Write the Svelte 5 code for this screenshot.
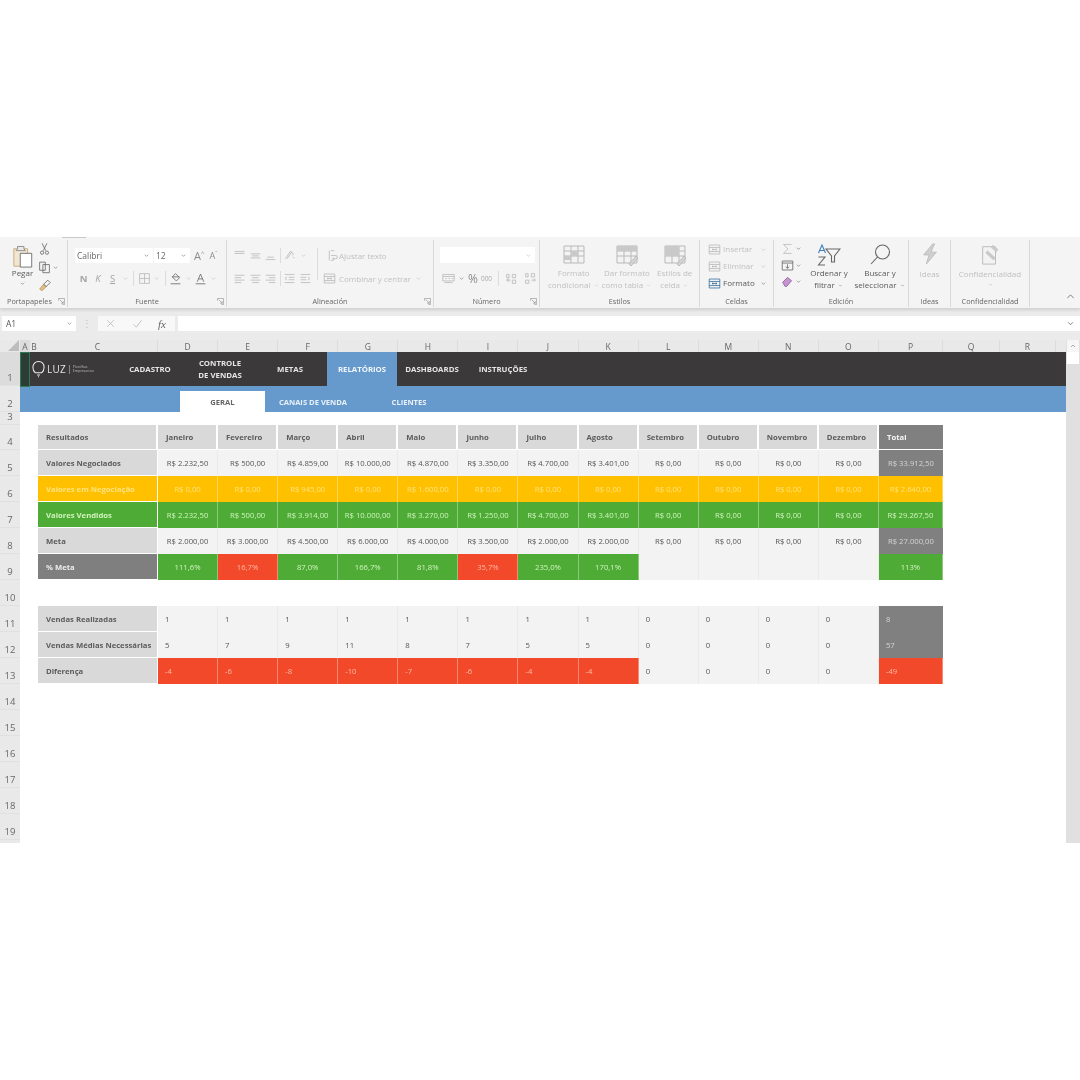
<script>
  const P = {
    chev: 'M5 6.5l3 3 3-3',
    up: 'M4 10l4-4 4 4',
    atop: 'M2 3h12M2 5.5h12',
    amid: 'M2 6h12M4 8.5h8M2 11h12',
    abot: 'M4 10h8M2 13h12',
    left: 'M2 4h12M2 7h8M2 10h12M2 13h8',
    center: 'M2 4h12M4 7h8M2 10h12M4 13h8',
    right: 'M2 4h12M6 7h8M2 10h12M6 13h8',
    indl: 'M2 3h12M7 6.5h7M7 9.5h7M2 13h12M5 6L2.5 8 5 10',
    indr: 'M2 3h12M2 6.5h7M2 9.5h7M2 13h12M11 6l2.5 2L11 10',
    orient: 'M3 12L9 3M5 12L11 3M9 3l4 3-2 2M12 10l2 1',
    wrap: 'M6 2h4M6 8h6a2 2 0 010 4H9M6 14h3M4 2v12M10 10.5l-2 1.5 2 1.5',
    merge: 'M1.5 2.5h13v11h-13zM1.5 5.5h13M1.5 10.5h13M5 8h6M5 8l1.5-1.3M5 8l1.5 1.3M11 8L9.5 6.7M11 8L9.5 9.3',
    border: 'M2 2h12v12H2zM2 8h12M8 2v12',
    fill: 'M8 2l5 5-4 4-5-5zM4 6h9M2 14.5h12',
    atxt: 'M4 12L8 2.5 12 12M5.5 8.5h5M2 14.5h12',
    money: 'M1 3h14v8H1zM1 5.5h14M4 8h2M8 8h2M12 8h2M3 13h10',
    inc: 'M2 3h3v4H2zM9 3h4v4H9zM2 10h5M5 8l-3 2 3 2M9 10h4v4H9z',
    dec: 'M2 2h3v4H2zM9 2h4v4H9zM9 10h5M12 8l2 2-2 2M2 10h4v4H2z',
    sigma: 'M13 3H3l5.5 5.5L3 14h10',
    fillDown: 'M1.5 2.5h13v11h-13zM1.5 5h13M8 6.5v5M6 9.5l2 2 2-2',
    close: 'M4 4l8 8M12 4l-8 8',
    check: 'M3 9l3.5 3.5L13 4'
  };

  const cols = [
    ['A', 'ca'], ['B', 'cb'], ['C', 'cc'], ['D', 'cm'], ['E', 'cm'], ['F', 'cm'], ['G', 'cm'], ['H', 'cm'],
    ['I', 'cm'], ['J', 'cm'], ['K', 'cm'], ['L', 'cm'], ['M', 'cm'], ['N', 'cm'], ['O', 'cm'], ['P', 'cp'],
    ['Q', 'cq'], ['R', 'cr']
  ];

  const rowNums = [
    [1, 'h1'], [2, 'h2'], [3, 'h3'], [4, 'h4'], ...Array.from({ length: 15 }, (_, i) => [i + 5, 'hn'])
  ];

  const months = ['Janeiro', 'Fevereiro', 'Março', 'Abril', 'Maio', 'Junho', 'Julho', 'Agosto', 'Setembro', 'Outubro', 'Novembro', 'Dezembro'];

  const brl = (list) => list.map((v) => 'R$ ' + v);
  const zeros = ['0,00', '0,00', '0,00', '0,00'];

  const top = [
    { label: 'Valores Negociados', lc: 'lab-g', cc: 'plain', tc: 'tot-g', cells: brl(['2.232,50', '500,00', '4.859,00', '10.000,00', '4.870,00', '3.350,00', '4.700,00', '3.401,00', ...zeros]), total: 'R$ 33.912,50' },
    { label: 'Valores em Negociação', lc: 'lab-a', cc: 'amber', tc: 'amber', cells: brl(['0,00', '0,00', '945,00', '0,00', '1.600,00', '0,00', '0,00', '0,00', ...zeros]), total: 'R$ 2.640,00' },
    { label: 'Valores Vendidos', lc: 'lab-v', cc: 'green', tc: 'green', cells: brl(['2.232,50', '500,00', '3.914,00', '10.000,00', '3.270,00', '1.250,00', '4.700,00', '3.401,00', ...zeros]), total: 'R$ 29.267,50' },
    { label: 'Meta', lc: 'lab-g', cc: 'plain', tc: 'tot-g', cells: brl(['2.000,00', '3.000,00', '4.500,00', '6.000,00', '4.000,00', '3.500,00', '2.000,00', '2.000,00', ...zeros]), total: 'R$ 27.000,00' }
  ];

  const pct = [['111,6%', 'green'], ['16,7%', 'red'], ['87,0%', 'green'], ['166,7%', 'green'], ['81,8%', 'green'], ['35,7%', 'red'], ['235,0%', 'green'], ['170,1%', 'green'], ['', 'plain'], ['', 'plain'], ['', 'plain'], ['', 'plain']];

  const low = [
    { label: 'Vendas Realizadas', cells: [1, 1, 1, 1, 1, 1, 1, 1, 0, 0, 0, 0], red: 0, total: 8, tc: 'tot-g' },
    { label: 'Vendas Médias Necessárias', cells: [5, 7, 9, 11, 8, 7, 5, 5, 0, 0, 0, 0], red: 0, total: 57, tc: 'tot-g' },
    { label: 'Diferença', cells: [-4, -6, -8, -10, -7, -6, -4, -4, 0, 0, 0, 0], red: 8, total: -49, tc: 'red' }
  ];
</script>

{#snippet ic(name, cls = '')}
  <svg class="ic {cls}" viewBox="0 0 16 16" aria-hidden="true"><path d={P[name]} /></svg>
{/snippet}

{#snippet launcher()}
  <svg class="launch" viewBox="0 0 8 8" aria-hidden="true"><path d="M.5 3V.5H7.5V7.5H5M2 2l4 4M6 3.500V6H3.500" /></svg>
{/snippet}

{#snippet sheetIcon(kind)}
  <svg class="bigic" viewBox="0 0 24 22" aria-hidden="true">
    <path class="grid" d="M2 2h20v17H2zM2 7h20M2 12h20M9 2v17M16 2v17" />
    {#if kind === 'cond'}
      <path class="tint" d="M9 7h7v5H9zM2 12h7v4H2z" />
    {:else if kind === 'table'}
      <path class="tint" d="M2 2h20v5H2z" />
      <path class="brush" d="M14 20l7-8 2 2-7 8z" />
    {:else}
      <path class="tint" d="M2 2h14v10H2z" />
      <path class="brush" d="M14 20l7-8 2 2-7 8z" />
    {/if}
  </svg>
{/snippet}

<div class="page">
  <div class="window">
    <div class="ribbon">
      <span class="tabmark"></span>

      <section class="g g-clip">
        <div class="body clip">
          <div class="paste">
            <svg class="pasteic" viewBox="0 0 24 26" aria-hidden="true">
              <path class="board" d="M2 4h15v19H2z" />
              <path class="clipper" d="M6 4V1.500h7V4l1.500 2h-10z" />
              <path class="sheet" d="M9 9h12.500v15H9z" />
            </svg>
            <span class="t on">Pegar</span>
            {@render ic('chev', 'on mini')}
          </div>
          <div class="clipside">
            <svg class="sm" viewBox="0 0 16 16" aria-hidden="true"><path class="line" d="M5 1l4.500 9M11 1L6.500 10" /><circle class="line" cx="5" cy="12.500" r="2" /><circle class="line" cx="11" cy="12.500" r="2" /></svg>
            <div class="inl">
              <svg class="sm" viewBox="0 0 16 16" aria-hidden="true"><path class="line" d="M2 2h7v10H2zM6 5h8v10H6z" /></svg>
              {@render ic('chev', 'on mini')}
            </div>
            <svg class="sm" viewBox="0 0 16 16" aria-hidden="true"><path class="tan" d="M2 13l5-6 3 3-5 5z" /><path class="line" d="M7 7l5-5 3 3-5 5z" /></svg>
          </div>
        </div>
        <div class="lab lab-left">Portapapeles</div>
        {@render launcher()}
      </section>

      <section class="g g-font">
        <div class="body stack">
          <div class="row r-font1">
            <div class="combo c-font"><span>Calibri</span>{@render ic('chev', 'on mini')}</div>
            <div class="combo c-size"><span>12</span>{@render ic('chev', 'on mini')}</div>
            <span class="grow">A<sup>^</sup></span>
            <span class="shrink">A<sup>ˇ</sup></span>
          </div>
          <div class="row r-font2">
            <b class="fx">N</b><i class="fx">K</i><u class="fx">S</u>
            {@render ic('chev', 'off mini')}
            <span class="vs"></span>
            {@render ic('border', 'off')}
            {@render ic('chev', 'off mini')}
            <span class="vs"></span>
            {@render ic('fill', 'on')}
            {@render ic('chev', 'off mini')}
            {@render ic('atxt', 'on')}
            {@render ic('chev', 'off mini')}
          </div>
        </div>
        <div class="lab">Fuente</div>
        {@render launcher()}
      </section>

      <section class="g g-align">
        <div class="body stack">
          <div class="row r-al1">
            {@render ic('atop', 'off')}{@render ic('amid', 'off')}{@render ic('abot', 'off')}
            <span class="vs"></span>
            {@render ic('orient', 'off')}
            {@render ic('chev', 'off mini')}
            <span class="vs vs-wide"></span>
            {@render ic('wrap', 'off')}
            <span class="t off">Ajustar texto</span>
          </div>
          <div class="row r-al2">
            {@render ic('left', 'off')}{@render ic('center', 'off')}{@render ic('right', 'off')}
            <span class="vs"></span>
            {@render ic('indl', 'off')}{@render ic('indr', 'off')}
            <span class="vs vs-2"></span>
            {@render ic('merge', 'off')}
            <span class="t off tm">Combinar y centrar</span>
            {@render ic('chev', 'off mini')}
          </div>
        </div>
        <div class="lab">Alineación</div>
        {@render launcher()}
      </section>

      <section class="g g-num">
        <div class="body stack">
          <div class="combo c-num">{@render ic('chev', 'off mini')}</div>
          <div class="row r-num">
            {@render ic('money', 'off')}
            {@render ic('chev', 'on mini')}
            <span class="pct">%</span>
            <span class="k">000</span>
            <span class="vs"></span>
            {@render ic('inc', 'off')}
            <span class="numgap"></span>
            {@render ic('dec', 'off')}
          </div>
        </div>
        <div class="lab">Número</div>
        {@render launcher()}
      </section>

      <section class="g g-styles">
        <div class="body styles">
          <div class="big b-cond">
            {@render sheetIcon('cond')}
            <span class="t off">Formato<br />condicional {@render ic('chev', 'off tiny')}</span>
          </div>
          <div class="big b-table">
            {@render sheetIcon('table')}
            <span class="t off">Dar formato<br />como tabla {@render ic('chev', 'off tiny')}</span>
          </div>
          <div class="big b-cell">
            {@render sheetIcon('cell')}
            <span class="t off">Estilos de<br />celda {@render ic('chev', 'off tiny')}</span>
          </div>
        </div>
        <div class="lab">Estilos</div>
      </section>

      <section class="g g-cells">
        <div class="body cellsb">
          <div class="ln">{@render ic('merge', 'off')}<span class="t off ct">Insertar</span>{@render ic('chev', 'off mini')}</div>
          <div class="ln">{@render ic('merge', 'off')}<span class="t off ct">Eliminar</span>{@render ic('chev', 'off mini')}</div>
          <div class="ln">{@render ic('merge', 'blue')}<span class="t on ct">Formato</span>{@render ic('chev', 'on mini')}</div>
        </div>
        <div class="lab">Celdas</div>
      </section>

      <section class="g g-edit">
        <div class="body edit">
          <div class="editcol">
            <div class="inl">{@render ic('sigma', 'off')}{@render ic('chev', 'on mini')}</div>
            <div class="inl">{@render ic('fillDown', 'on')}{@render ic('chev', 'on mini')}</div>
            <div class="inl">
              <svg class="ic" viewBox="0 0 16 16" aria-hidden="true"><path class="eraser" d="M2 9l6-6 5 4-6 7H5z" /></svg>
              {@render ic('chev', 'on mini')}
            </div>
          </div>
          <div class="big b-sort">
            <svg class="bigic" viewBox="0 0 24 22" aria-hidden="true">
              <path class="blueline" d="M1.500 9L5 1l3.500 8M3 6.500h4" />
              <path class="dark" d="M1.500 13H8L1.500 21H8" />
              <path class="dark" d="M9 5h14l-5.500 7v6h-3v-6z" />
            </svg>
            <span class="t on">Ordenar y<br />filtrar {@render ic('chev', 'on tiny')}</span>
          </div>
          <div class="big b-search">
            <svg class="bigic" viewBox="0 0 24 22" aria-hidden="true"><circle class="dark" cx="14.500" cy="8" r="7" /><path class="dark" d="M9.500 13L3 20" /></svg>
            <span class="t on">Buscar y<br />seleccionar {@render ic('chev', 'on tiny')}</span>
          </div>
        </div>
        <div class="lab">Edición</div>
      </section>

      <section class="g g-ideas">
        <div class="body bigone">
          <svg class="bigic" viewBox="0 0 24 24" aria-hidden="true"><path class="bolt" d="M15 1L5 13h6l-3 10 11-13h-6l4-9z" /></svg>
          <span class="t off">Ideas</span>
        </div>
        <div class="lab">Ideas</div>
      </section>

      <section class="g g-conf">
        <div class="body bigone">
          <svg class="bigic" viewBox="0 0 24 24" aria-hidden="true"><path class="grid" d="M4 4h14v19H4z" /><path class="tint" d="M9 8l9 8-2 3-9-8zM15 2l6 5-2 3-6-5z" /></svg>
          <span class="t off">Confidencialidad</span>
          {@render ic('chev', 'off mini')}
        </div>
        <div class="lab">Confidencialidad</div>
      </section>

      <div class="collapse">{@render ic('up', 'on')}</div>
    </div>

    <div class="fbar">
      <div class="namebox"><span>A1</span>{@render ic('chev', 'on mini')}</div>
      <span class="dots">⋮</span>
      <div class="fbtns">
        {@render ic('close', 'off')}
        {@render ic('check', 'off')}
        <i class="fxl">fx</i>
      </div>
      <div class="finput">{@render ic('chev', 'on')}</div>
    </div>

    <div class="grid-area">
      <div class="sheet-wrap">
        <div class="colhead">
          <div class="corner"><span class="tri"></span></div>
          {#each cols as [name, cls]}
            <div class="colh {cls}">{name}</div>
          {/each}
        </div>

        <div class="sheet-main">
          <div class="rowhead">
            {#each rowNums as [n, cls]}
              <div class="rowh {cls}">{n}</div>
            {/each}
          </div>

          <div class="canvas">
            <nav class="nav">
              <div class="logo">
                <svg class="bulb" viewBox="0 0 14 18" aria-hidden="true"><path d="M3.500 13C1.800 11.800 1 10 1 7.500 1 3.500 3.500 1 7 1s6 2.500 6 6.500c0 2.500-.8 4.300-2.500 5.500zM5.500 15.500h3M6.500 17.300h1" /></svg>
                <span class="luz">LUZ</span>
                <span class="lsep"></span>
                <span class="ltiny">Planilhas<br />Empresariais</span>
              </div>
              <span class="ni">CADASTRO</span>
              <span class="ni">CONTROLE<br />DE VENDAS</span>
              <span class="ni">METAS</span>
              <span class="ni active">RELATÓRIOS</span>
              <span class="ni">DASHBOARDS</span>
              <span class="ni ni-last">INSTRUÇÕES</span>
              <span class="cellsel"></span>
            </nav>

            <div class="subnav">
              <span class="si current">GERAL</span>
              <span class="si">CANAIS DE VENDA</span>
              <span class="si">CLIENTES</span>
            </div>

            <div class="tbl tbl-top">
              <div class="c lab-g h">Resultados</div>
              {#each months as m}
                <div class="c hd h">{m}</div>
              {/each}
              <div class="c tot-g h tot-h">Total</div>

              {#each top as r}
                <div class="c {r.lc} rl">{r.label}</div>
                {#each r.cells as v}
                  <div class="c {r.cc} mid">{v}</div>
                {/each}
                <div class="c {r.tc} mid">{r.total}</div>
              {/each}

              <div class="c lab-d rl">% Meta</div>
              {#each pct as [v, k]}
                <div class="c {k} mid">{v}</div>
              {/each}
              <div class="c green mid">113%</div>
            </div>

            <div class="tbl tbl-low">
              {#each low as r}
                <div class="c lab-g rl">{r.label}</div>
                {#each r.cells as v, i}
                  <div class="c {i < r.red ? 'red' : 'plain'} lft">{v}</div>
                {/each}
                <div class="c {r.tc} lft">{r.total}</div>
              {/each}
            </div>
          </div>
        </div>
      </div>

      <div class="vscroll">
        <div class="sbtn">{@render ic('up', 'on')}</div>
        <div class="thumb"></div>
      </div>
    </div>
  </div>
</div>

<style>
  :global(body) {
    margin: 0;
    background: #fff;
  }

  .page {
    width: 1080px;
    height: 1080px;
    padding-top: 237px;
    box-sizing: border-box;
    background: #fff;
    overflow: hidden;
  }

  .window {
    width: 1080px;
    height: 606px;
    font-family: 'Open Sans', 'Liberation Sans', sans-serif;
    filter: blur(0.45px);
    display: flex;
    flex-direction: column;
    background: #eaeaea;
  }

  /* ribbon */
  .ribbon {
    position: relative;
    height: 71px;
    flex: none;
    display: flex;
    background: #f4f4f4;
    box-shadow: 0 2px 3px rgba(0, 0, 0, 0.12);
    z-index: 2;
  }

  .tabmark {
    position: absolute;
    left: 62px;
    top: 0;
    width: 24px;
    height: 1px;
    background: #c9c9c9;
  }

  .g {
    position: relative;
    height: 67px;
    flex: none;
    border-right: 1px solid #d8d8d8;
    box-sizing: border-box;
    margin-top: 3px;
  }

  .g-clip { width: 68px; }
  .g-font { width: 159px; }
  .g-align { width: 207px; }
  .g-num { width: 106px; }
  .g-styles { width: 160px; }
  .g-cells { width: 74px; }
  .g-edit { width: 135px; }
  .g-ideas { width: 42px; }
  .g-conf { width: 79px; }

  .body {
    height: 53px;
    box-sizing: border-box;
  }

  .lab {
    position: absolute;
    left: 0;
    right: 0;
    bottom: 0;
    height: 14px;
    line-height: 16px;
    text-align: center;
    font-size: 7.3px;
    color: #666;
  }

  .lab-left {
    text-align: left;
    padding-left: 7px;
  }

  .launch {
    position: absolute;
    right: 2px;
    bottom: 2px;
    width: 7px;
    height: 7px;
    fill: none;
    stroke: #9a9a9a;
    stroke-width: 0.8;
  }

  .ic {
    width: 13px;
    height: 13px;
    flex: none;
    fill: none;
    stroke: currentColor;
    stroke-width: 1;
  }

  .ic.mini {
    width: 9px;
    height: 9px;
  }

  .ic.tiny {
    width: 7px;
    height: 7px;
    vertical-align: -1px;
  }

  .ic.on { color: #666; }
  .ic.off { color: #b9b9b9; }
  .ic.blue { color: #3b6f9e; }

  .t {
    font-size: 8px;
    line-height: 12px;
    white-space: nowrap;
  }

  .t.on { color: #5a5a5a; }
  .t.off { color: #c0c0c0; }

  .row,
  .inl,
  .ln {
    display: flex;
    align-items: center;
  }

  .stack {
    display: flex;
    flex-direction: column;
  }

  .vs {
    width: 1px;
    height: 15px;
    background: #dcdcdc;
    flex: none;
  }

  /* clipboard */
  .clip {
    display: flex;
    padding: 5px 0 0 11px;
    gap: 4px;
  }

  .paste {
    width: 23px;
    display: flex;
    flex-direction: column;
    align-items: center;
  }

  .pasteic {
    width: 22px;
    height: 24px;
    flex: none;
    fill: none;
  }

  .board { fill: #f1e6d2; stroke: #c9a878; }
  .clipper { fill: #e9e9e9; stroke: #8a8a8a; }
  .sheet { fill: #fff; stroke: #6d6d6d; }

  .paste .t {
    margin-top: -2px;
  }

  .clipside {
    display: flex;
    flex-direction: column;
    gap: 4px;
    margin-top: -3px;
  }

  .sm {
    width: 13px;
    height: 14px;
    flex: none;
  }

  .line { fill: none; stroke: #666; stroke-width: 1; }
  .tan { fill: #dfbf86; stroke: #c09a5e; }

  /* font */
  .g-font .body {
    padding: 8px 0 0 7px;
  }

  .combo {
    display: flex;
    align-items: center;
    justify-content: space-between;
    height: 15px;
    background: #fff;
    box-sizing: border-box;
    padding: 0 2px;
    font-size: 8.5px;
    color: #666;
  }

  .c-font { width: 78px; }
  .c-size { width: 36px; margin-left: 1px; }

  .grow,
  .shrink {
    color: #8c8c8c;
    line-height: 15px;
  }

  .grow { font-size: 11px; margin-left: 4px; }
  .shrink { font-size: 9px; margin-left: 5px; }

  sup {
    font-size: 6px;
    line-height: 0;
  }

  .r-font2 {
    margin-top: 8px;
    height: 15px;
    padding-left: 2px;
    gap: 1.500px;
  }

  .fx {
    width: 13px;
    text-align: center;
    font-size: 9.5px;
    color: #a5a5a5;
    flex: none;
  }

  .r-font2 .vs {
    margin: 0 2px;
  }

  /* alignment */
  .g-align .body {
    padding: 8px 0 0 6px;
  }

  .r-al1,
  .r-al2 {
    height: 15px;
    gap: 2.500px;
  }

  .r-al2 {
    margin-top: 8px;
  }

  .r-al1 .t {
    margin-left: -2px;
  }

  .tm {
    margin-left: 1px;
  }

  .vs-wide {
    margin: 0 5px 0 7px;
    height: 32px;
    align-self: flex-start;
  }

  .vs-2 {
    margin: 0 4px 0 1px;
    background: transparent;
  }

  /* number */
  .g-num .body {
    padding: 7px 0 0 6px;
  }

  .c-num {
    width: 95px;
    height: 16px;
    justify-content: flex-end;
  }

  .r-num {
    margin-top: 7.500px;
    height: 15px;
    padding-left: 2px;
    gap: 2px;
  }

  .pct {
    color: #8c8c8c;
    font-size: 12px;
    line-height: 15px;
    margin-right: 1px;
  }

  .k {
    color: #aaa;
    font-size: 6.5px;
  }

  .r-num .vs {
    margin: 0 4px;
  }

  .numgap {
    width: 2px;
  }

  /* big buttons */
  .big,
  .bigone {
    display: flex;
    flex-direction: column;
    align-items: center;
    text-align: center;
  }

  .bigic {
    width: 24px;
    height: 22px;
    flex: none;
    fill: none;
    margin-bottom: 1px;
  }

  .grid { fill: #f3f3f3; stroke: #b9b9b9; }
  .tint { fill: #c9c9c9; stroke: none; }
  .brush { fill: #d5d5d5; stroke: #aaa; stroke-width: 0.7; }
  .dark { fill: none; stroke: #666; stroke-width: 1.1; }
  .blueline { fill: none; stroke: #3c80c0; stroke-width: 1.1; }
  .eraser { fill: #c594cf; stroke: #8f5aa3; }
  .bolt { fill: #cfcfcf; stroke: #bdbdbd; }

  .styles {
    display: flex;
    padding: 4px 0 0 4px;
  }

  .b-cond { width: 60px; }
  .b-table { width: 47px; }
  .b-cell { width: 49px; }

  .cellsb {
    padding: 2px 0 0 8px;
    display: flex;
    flex-direction: column;
    gap: 3px;
  }

  .ln {
    height: 14px;
    gap: 2px;
  }

  .ct {
    width: 33px;
    margin-right: 1px;
  }

  .edit {
    display: flex;
    padding: 1px 0 0 7px;
  }

  .editcol {
    display: flex;
    flex-direction: column;
    gap: 3.500px;
    width: 26px;
    padding-top: 1px;
  }

  .b-sort { width: 44px; padding-top: 3px; }
  .b-search { width: 52px; margin-left: 3px; padding-top: 3px; }

  .bigone {
    padding-top: 3px;
  }

  .bigone .bigic {
    margin-bottom: 3px;
  }

  .collapse {
    position: absolute;
    right: 3px;
    bottom: 0;
  }

  /* formula bar */
  .fbar {
    height: 32px;
    flex: none;
    box-sizing: border-box;
    padding: 8px 0 9px 2px;
    display: flex;
    align-items: stretch;
    background: #ebebeb;
  }

  .namebox {
    width: 74px;
    background: #fff;
    display: flex;
    align-items: center;
    justify-content: space-between;
    padding: 0 2px 0 4px;
    box-sizing: border-box;
    font-size: 8.5px;
    color: #555;
  }

  .dots {
    width: 22px;
    text-align: center;
    color: #bbb;
    font-size: 10px;
    line-height: 15px;
  }

  .fbtns {
    width: 77px;
    background: #f8f8f8;
    display: flex;
    align-items: center;
    box-sizing: border-box;
    padding-left: 6px;
    gap: 14px;
  }

  .fxl {
    font-family: 'Liberation Serif', serif;
    font-size: 11px;
    color: #666;
  }

  .finput {
    margin-left: 3px;
    flex: 1;
    background: #fff;
    display: flex;
    align-items: center;
    justify-content: flex-end;
    padding-right: 3px;
  }

  /* grid */
  .grid-area {
    flex: 1;
    min-height: 0;
    display: flex;
  }

  .sheet-wrap {
    width: 1066px;
    overflow: hidden;
    display: flex;
    flex-direction: column;
  }

  .colhead {
    height: 12px;
    flex: none;
    display: flex;
    background: #e9e9e9;
  }

  .corner {
    width: 20px;
    position: relative;
    flex: none;
  }

  .tri {
    position: absolute;
    right: 1px;
    bottom: 1px;
    width: 0;
    height: 0;
    border-left: 11px solid transparent;
    border-bottom: 11px solid #bdbdbd;
  }

  .colh {
    flex: none;
    font-size: 8.5px;
    line-height: 13px;
    text-align: center;
    color: #666;
    box-sizing: border-box;
    border-right: 1px solid #dcdcdc;
  }

  .ca { width: 10px; background: #dcdcdc; border: 0; }
  .cb { width: 8px; border: 0; }
  .cc { width: 120px; }
  .cm { width: 60.08px; }
  .cp { width: 64px; }
  .cq { width: 57px; }
  .cr { width: 56px; }

  .sheet-main {
    flex: 1;
    min-height: 0;
    display: flex;
  }

  .rowhead {
    width: 20px;
    flex: none;
    background: #e9e9e9;
  }

  .rowh {
    box-sizing: border-box;
    display: flex;
    align-items: flex-end;
    justify-content: center;
    font-size: 9.5px;
    line-height: 14px;
    color: #666;
    border-bottom: 1px solid #e0e0e0;
  }

  .h1 { height: 34px; background: #dcdcdc; }
  .h2 { height: 26px; }
  .h3 { height: 13px; }
  .h4 { height: 25px; }
  .hn { height: 26px; }

  .canvas {
    flex: 1;
    background: #fff;
    min-width: 0;
  }

  .nav {
    position: relative;
    height: 34px;
    display: flex;
    background: #3b393a;
  }

  .cellsel {
    position: absolute;
    left: 0;
    top: 0;
    width: 10px;
    height: 35px;
    box-sizing: border-box;
    border: 1px solid #2f7a55;
    background: rgba(20, 70, 50, 0.35);
  }

  .logo {
    width: 95px;
    flex: none;
    display: flex;
    align-items: center;
    padding-left: 12px;
    box-sizing: border-box;
    color: #e8e8e8;
  }

  .bulb {
    width: 13px;
    height: 18px;
    flex: none;
    fill: none;
    stroke: #f0f0f0;
    stroke-width: 1.1;
  }

  .luz {
    font-size: 10px;
    margin-left: 2px;
    letter-spacing: 0.2px;
    color: #e4e4e4;
  }

  .lsep {
    width: 1px;
    height: 9px;
    background: #888;
    margin: 0 3px;
  }

  .ltiny {
    font-size: 3.5px;
    line-height: 4.500px;
    color: #bbb;
  }

  .ni {
    width: 70px;
    flex: none;
    display: flex;
    align-items: center;
    justify-content: center;
    text-align: center;
    font-size: 7.8px;
    line-height: 12px;
    font-weight: 700;
    color: #e6e6e6;
  }

  .ni.active {
    margin-left: 2px;
    background: #6699cc;
    color: #f2f6fb;
  }

  .ni-last {
    margin-left: 1px;
  }

  .subnav {
    height: 26px;
    box-sizing: border-box;
    padding: 5px 0 0 160px;
    display: flex;
    background: #6699cc;
  }

  .si {
    width: 96px;
    flex: none;
    display: flex;
    align-items: center;
    justify-content: center;
    font-size: 7.6px;
    font-weight: 700;
    color: #e8f1fa;
  }

  .si.current {
    width: 85px;
    background: #fff;
    color: #666;
  }

  .tbl {
    display: grid;
    grid-template-columns: 120px repeat(12, 60.08px) 64px;
    margin-left: 18px;
    width: 905px;
    font-size: 7.7px;
  }

  .tbl-top {
    margin-top: 13px;
    grid-template-rows: 25px repeat(5, 26px);
  }

  .tbl-low {
    margin-top: 26px;
    grid-auto-rows: 26px;
  }

  .c {
    display: flex;
    align-items: center;
    box-sizing: border-box;
    white-space: nowrap;
    min-width: 0;
    overflow: hidden;
    border-right: 1px solid rgba(255, 255, 255, 0.35);
  }

  .h,
  .rl {
    font-weight: 700;
    font-size: 7.7px;
    padding-left: 8px;
  }

  .rl {
    border-right: 1px solid #fff;
    border-bottom: 1px solid #fff;
  }

  .h {
    border-right: 2px solid #fff;
    border-bottom: 1px solid #fff;
  }

  .mid {
    justify-content: center;
  }

  .lft {
    padding-left: 7px;
  }

  .hd,
  .lab-g {
    background: #d9d9d9;
    color: #5c5c5c;
  }

  .lab-a,
  .amber {
    background: #ffc000;
    color: #ffe27d;
  }

  .lab-v,
  .green {
    background: #4dab36;
    color: #d0f3bd;
  }

  .lab-d {
    background: #7f7f7f;
    color: #ececec;
  }

  .plain {
    background: #f3f3f3;
    color: #555;
    border-right-color: #eaeaea;
  }

  .red {
    background: #f2492a;
    color: #ffb9a2;
  }

  .tot-g {
    background: #808080;
    color: #d5d5d5;
    border-right: 0;
  }

  .tot-h {
    color: #f4f4f4;
  }

  /* scrollbar */
  .vscroll {
    width: 14px;
    flex: none;
    background: #e0e0e0;
    display: flex;
    flex-direction: column;
    align-items: center;
  }

  .sbtn {
    width: 12px;
    height: 12px;
    background: #f6f6f6;
    display: flex;
    align-items: center;
    justify-content: center;
  }

  .sbtn .ic {
    width: 8px;
    height: 8px;
  }

  .thumb {
    width: 12px;
    height: 12px;
    background: #fff;
  }
</style>
